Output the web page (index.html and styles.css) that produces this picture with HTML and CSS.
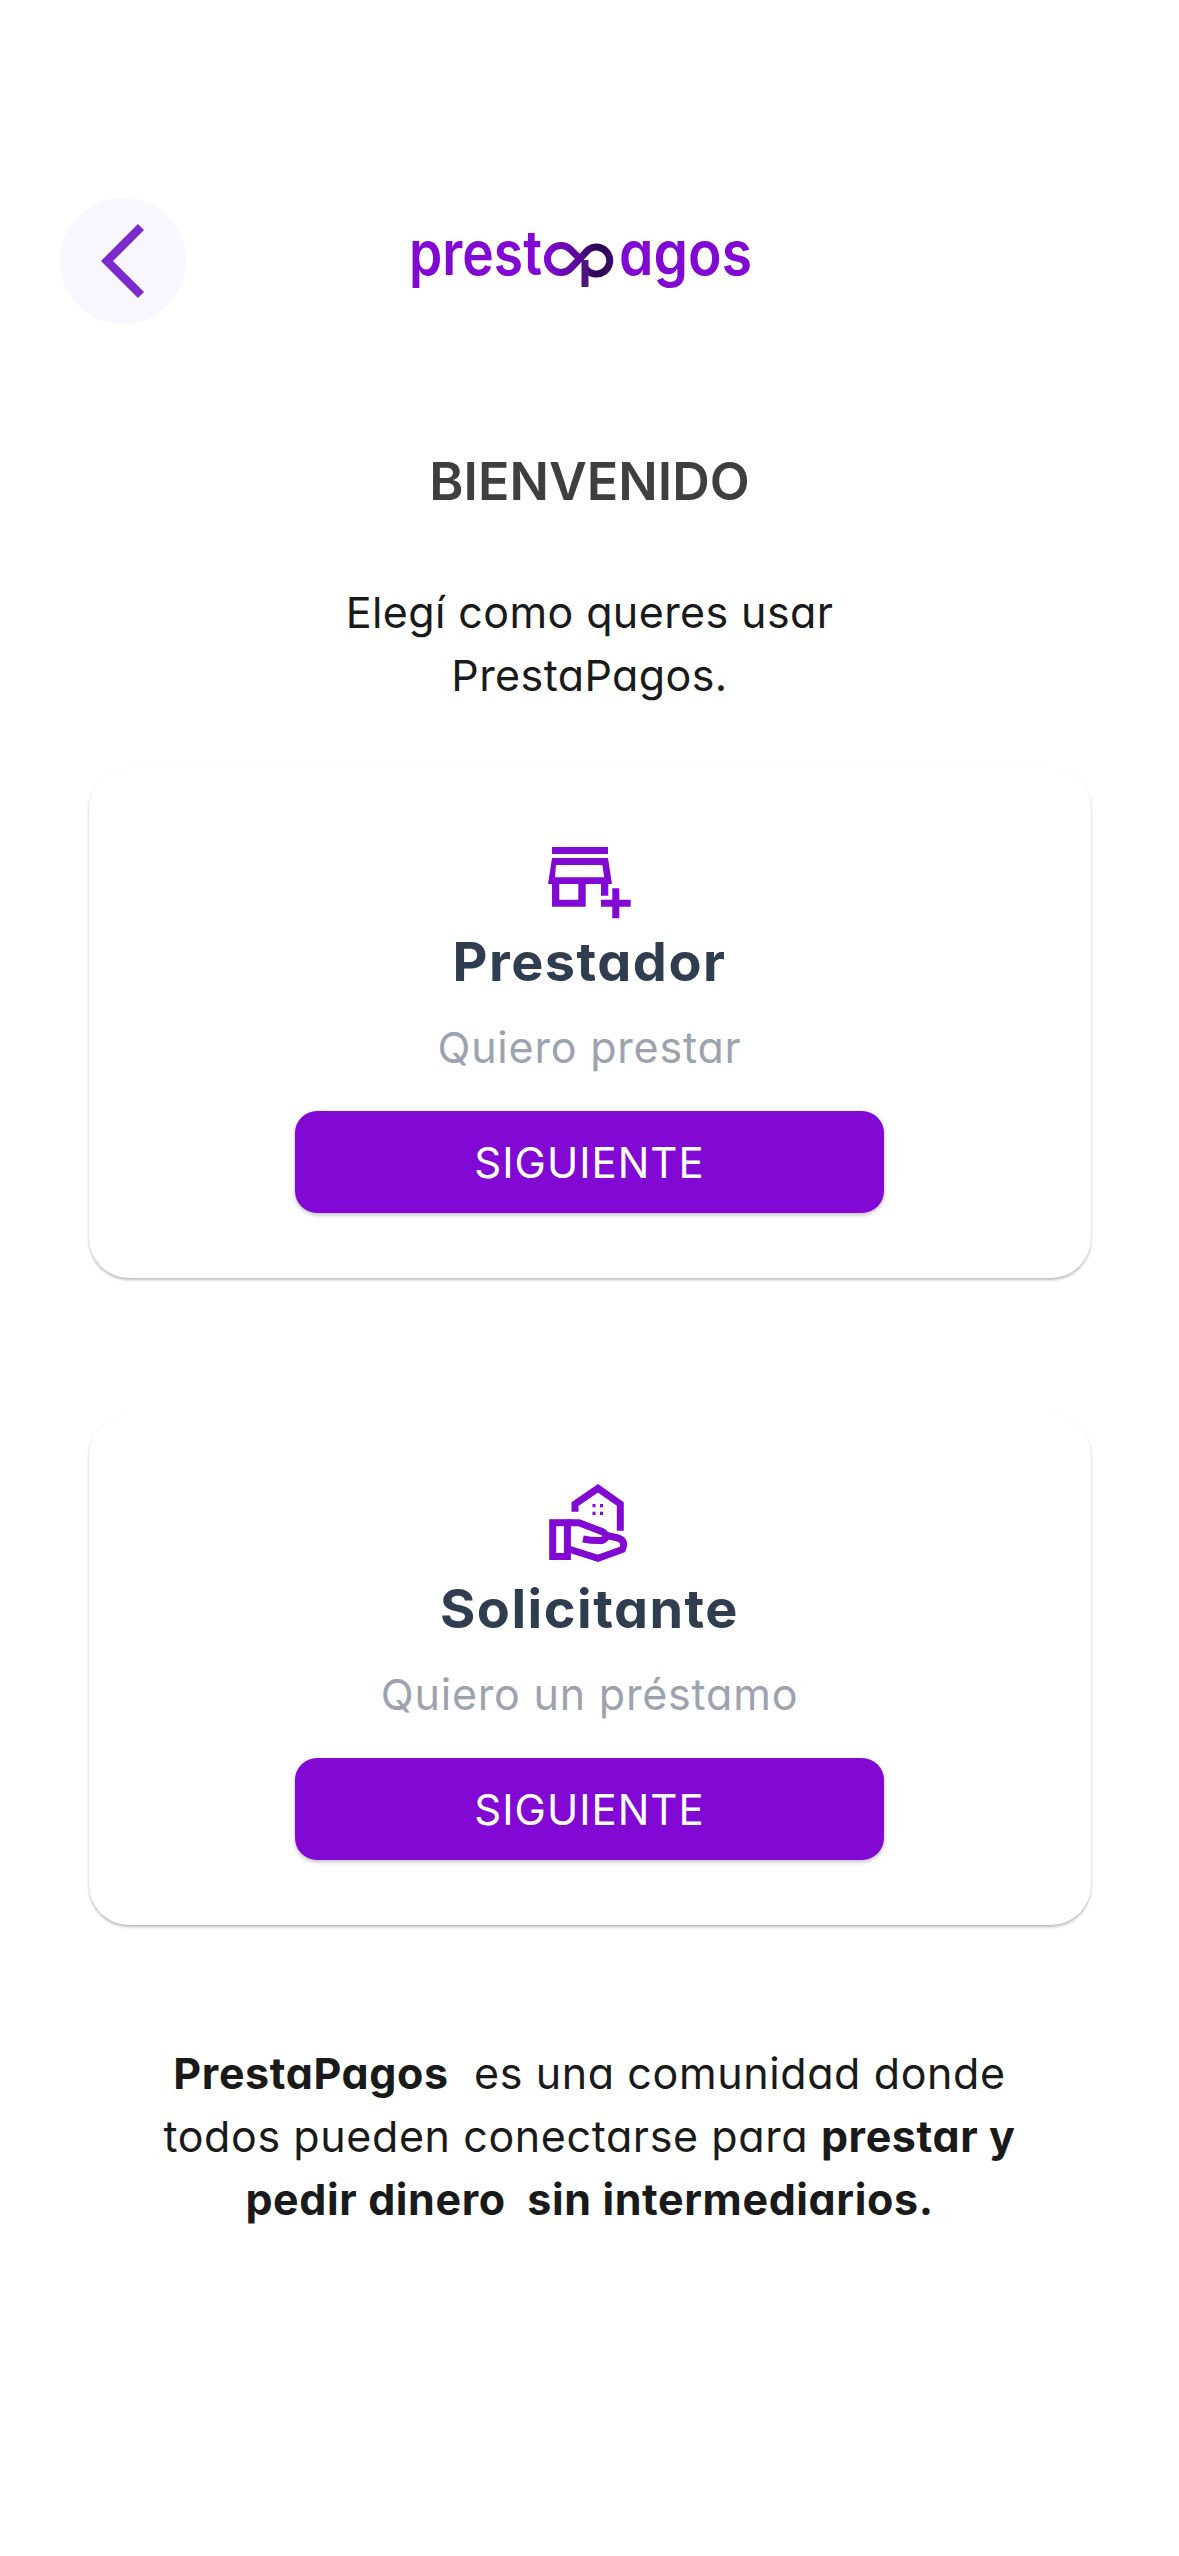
FILE: index.html
```html
<!DOCTYPE html>
<html lang="es">
<head>
<meta charset="utf-8">
<title>PrestaPagos</title>
<link rel="stylesheet" href="styles.css">
</head>
<body>
<main class="screen">
  <header class="top">
    <button class="back" aria-label="Volver">
      <svg width="126" height="126" viewBox="0 0 126 126"><path d="M81 29 L47 63 L81 97" fill="none" stroke="#7b2acb" stroke-width="8.500"/></svg>
    </button>
    <svg class="logo" width="346" height="66" viewBox="0 0 346 66" role="img" aria-label="prestapagos">
      <defs>
        <linearGradient id="mark" gradientUnits="userSpaceOnUse" x1="138" y1="0" x2="206" y2="0">
          <stop offset="0" stop-color="#8209d3"/><stop offset="0.45" stop-color="#5a0a9c"/><stop offset="0.75" stop-color="#2a0650"/><stop offset="1" stop-color="#3c0a6e"/>
        </linearGradient>
      </defs>
      <text class="logo-text" x="1" y="47" textLength="133" lengthAdjust="spacingAndGlyphs">prest</text>
      <text class="logo-text" x="211" y="47" textLength="133" lengthAdjust="spacingAndGlyphs">agos</text>
      <path d="M174 33 L162.500 21.500 A13.500 13.500 0 1 0 162.500 40.500 L180.500 21.500 A13.500 13.500 0 1 1 177 40" fill="none" stroke="url(#mark)" stroke-width="7"/>
      <path d="M177 32 V59" fill="none" stroke="#4d1480" stroke-width="7"/>
    </svg>
  </header>

  <h1 class="title">BIENVENIDO</h1>
  <p class="intro">Elegí como queres usar<br>PrestaPagos.</p>

  <section class="card">
    <svg class="icon" width="83" height="72" viewBox="0 0 83 72">
      <path fill="#8209d3" fill-rule="evenodd" d="M4 0 H60 V7 H4 Z M4 11 H60 L64 37 H60.300 V48.700 H53 V37 H37.700 V59.700 H4 V37 H0 Z M8 18 L7 30.300 H56.300 L54.300 18 Z M11.300 37 V52.700 H30.300 V37 Z"/>
      <path fill="#8209d3" d="M64.300 41.300 H71.300 V52.700 H82.700 V59.700 H71.300 V71.300 H64.300 V59.700 H53 V52.700 H64.300 Z"/>
    </svg>
    <h2 class="role">Prestador</h2>
    <p class="hint">Quiero prestar</p>
    <a class="next">SIGUIENTE</a>
  </section>

  <section class="card second">
    <svg class="icon" width="82" height="78" viewBox="0 0 82 78">
      <g fill="none" stroke="#8209d3" stroke-width="7">
        <path d="M26 27.700 V20 L49 4.300 L71.300 20 V46.700"/>
        <rect x="3.700" y="38.700" width="14.700" height="33.800"/>
        <path d="M18 38.700 H30 L53.400 47.700 Q61 53 53 56.500 Q44 57 34 55"/>
        <path d="M18 64.500 L49 74.300 L73.300 65.500 Q78 56 67 53.500 L58 51.500"/>
      </g>
      <g fill="#8209d3">
        <rect x="43.500" y="20" width="3" height="3.300"/><rect x="51" y="20" width="3" height="3.300"/>
        <rect x="43.500" y="27.700" width="3" height="3.300"/><rect x="51" y="27.700" width="3" height="3.300"/>
      </g>
    </svg>
    <h2 class="role">Solicitante</h2>
    <p class="hint">Quiero un préstamo</p>
    <a class="next">SIGUIENTE</a>
  </section>

  <p class="about"><strong>PrestaPagos</strong>&nbsp; es una comunidad donde<br>todos pueden conectarse para <strong>prestar y<br>pedir dinero&nbsp; sin intermediarios.</strong></p>
</main>
</body>
</html>
```
FILE: styles.css
```css
* { box-sizing: border-box; }
html, body { margin: 0; padding: 0; background: #fff; }
body { font-family: Inter, "Noto Sans", sans-serif; font-feature-settings: "cv11" 1; }
.screen { width: 1179px; height: 2556px; display: flex; flex-direction: column; align-items: center; padding-top: 198px; overflow: hidden; }
.top { width: 100%; display: flex; align-items: center; padding-left: 60px; gap: 222px; height: 126px; }
.back { width: 126px; height: 126px; padding: 0; border: 0; border-radius: 50%; background: #f8f6fe; display: block; }
.back svg { display: block; }
.logo { display: block; overflow: visible; }
.logo-text { font-family: Inter, sans-serif; font-size: 62px; font-weight: 600; fill: #8209d3; }
.title { margin: 128px 0 0; font-size: 52px; line-height: 60px; font-weight: 600; color: #3f3f3f; letter-spacing: 0; }
.intro { margin: 69px 0 0; font-size: 43px; line-height: 63px; font-weight: 400; color: #1a1a1a; text-align: center; letter-spacing: .4px; }
.card { width: 1002px; height: 510px; margin-top: 61px; background: #fff; border-radius: 40px; box-shadow: 0 2px 3px rgba(0,0,0,.28); display: flex; flex-direction: column; align-items: center; padding-top: 79px; }
.card.second { margin-top: 137px; padding-top: 69px; }
.second .role { margin-top: 13px; }
.icon { display: block; }
.role { margin: 9px 0 0; font-size: 54px; line-height: 68px; font-weight: 700; color: #303d50; letter-spacing: 1.5px; }
.hint { margin: 20px 0 0; font-size: 43px; line-height: 62px; color: #9ca3af; letter-spacing: .8px; }
.next { margin-top: 33px; width: 589px; height: 102px; border-radius: 22px; background: #8209d3; color: #fff; font-size: 42px; font-weight: 400; letter-spacing: 1px; display: flex; align-items: center; justify-content: center; box-shadow: 0 2px 4px rgba(0,0,0,.25); }
.about { margin: 117px 0 0; font-size: 43px; line-height: 63px; color: #1a1a1a; text-align: center; letter-spacing: .6px; }
.about strong { font-weight: 700; }
```
